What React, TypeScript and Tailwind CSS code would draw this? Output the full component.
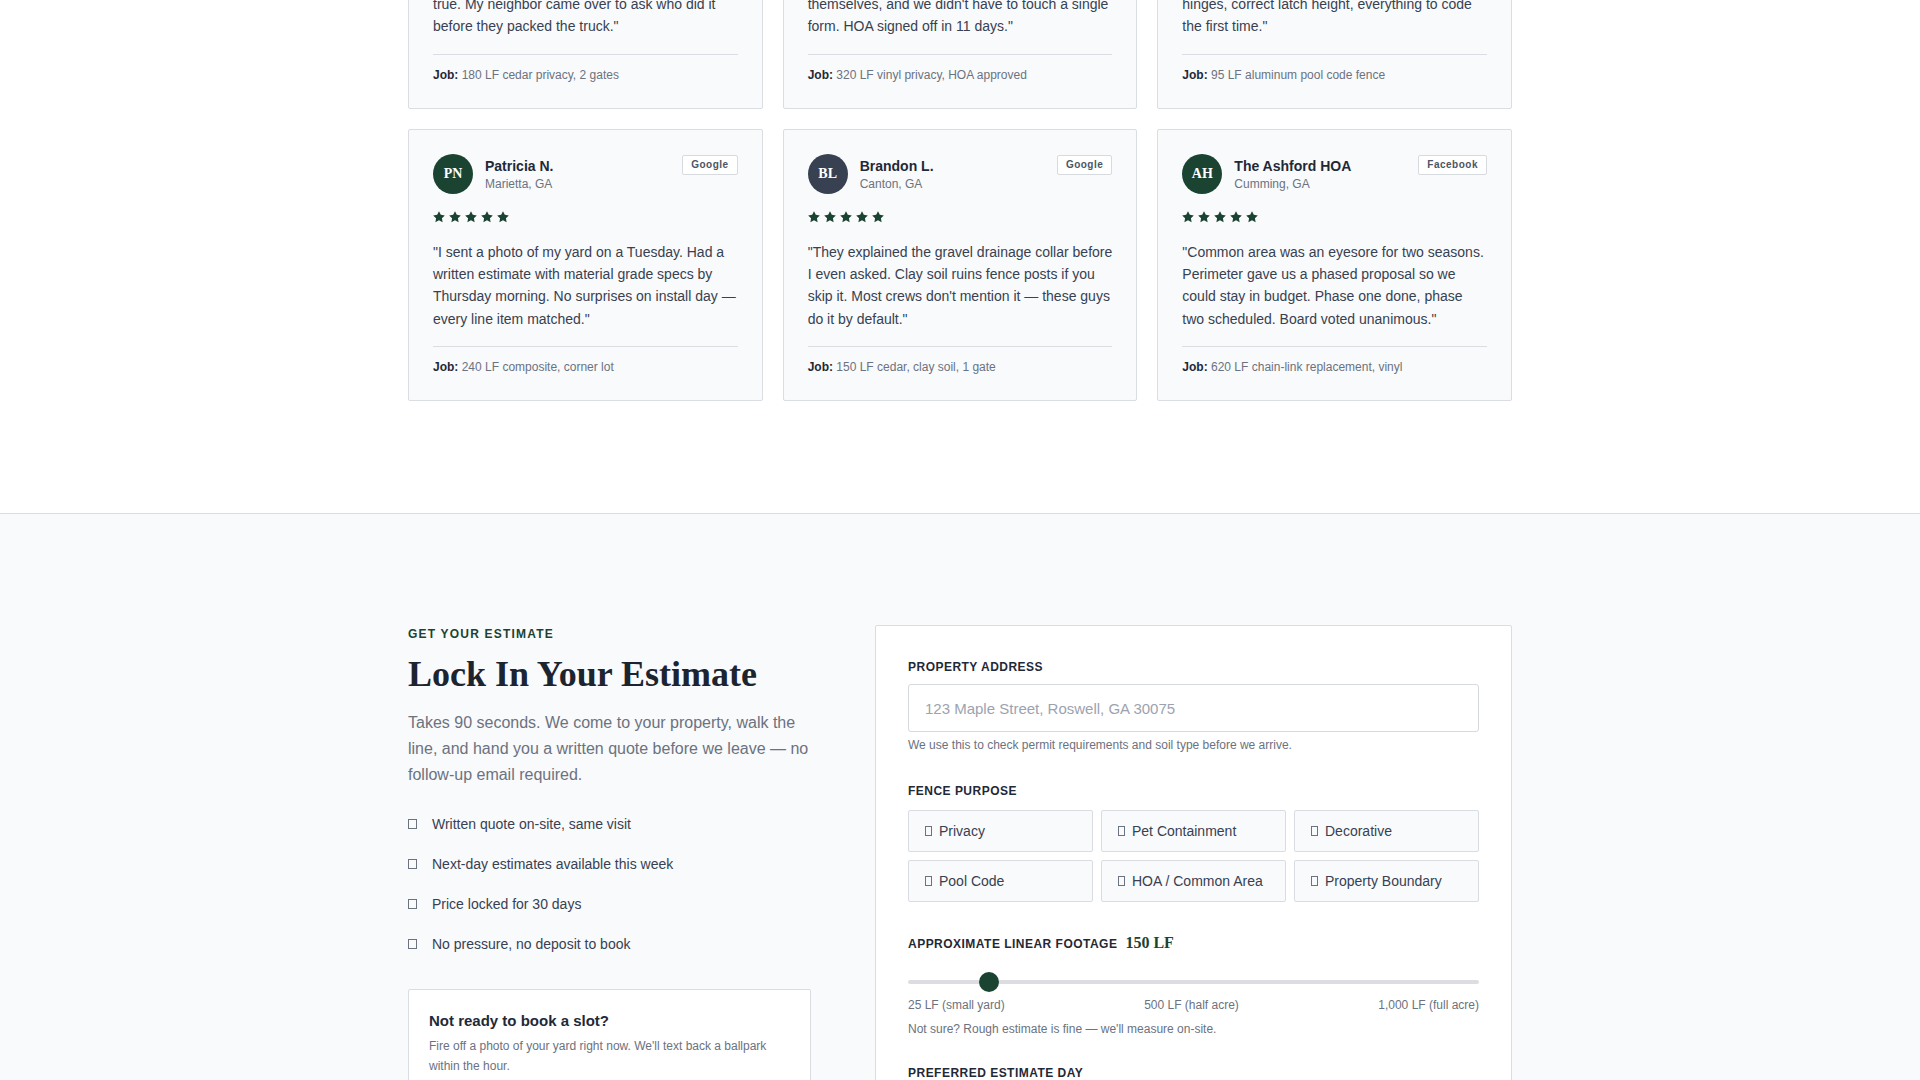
import React from "react";

type Review = {
  initials: string;
  name: string;
  location: string;
  source: string;
  avatar: string;
  lines: string[];
  job: string;
};

const reviews: Review[] = [
  {
    initials: "DR",
    name: "David R.",
    location: "Roswell, GA",
    source: "Google",
    avatar: "bg-[#1b4332]",
    lines: [
      "\"Got three quotes and Perimeter was the only crew",
      "that pulled the permit for us. Gates swing dead",
      "true. My neighbor came over to ask who did it",
      "before they packed the truck.\"",
    ],
    job: "180 LF cedar privacy, 2 gates",
  },
  {
    initials: "MT",
    name: "Michelle T.",
    location: "Alpharetta, GA",
    source: "Google",
    avatar: "bg-[#374151]",
    lines: [
      "\"Our HOA has strict vinyl specs. The crew pulled",
      "the architectural guidelines and filed the request",
      "themselves, and we didn't have to touch a single",
      "form. HOA signed off in 11 days.\"",
    ],
    job: "320 LF vinyl privacy, HOA approved",
  },
  {
    initials: "KS",
    name: "Kevin S.",
    location: "Milton, GA",
    source: "Yelp",
    avatar: "bg-[#1b4332]",
    lines: [
      "\"We needed the pool fence inspected before our",
      "closing date. Self-closing gates, proper gate",
      "hinges, correct latch height, everything to code",
      "the first time.\"",
    ],
    job: "95 LF aluminum pool code fence",
  },
  {
    initials: "PN",
    name: "Patricia N.",
    location: "Marietta, GA",
    source: "Google",
    avatar: "bg-[#1b4332]",
    lines: [
      "\"I sent a photo of my yard on a Tuesday. Had a",
      "written estimate with material grade specs by",
      "Thursday morning. No surprises on install day —",
      "every line item matched.\"",
    ],
    job: "240 LF composite, corner lot",
  },
  {
    initials: "BL",
    name: "Brandon L.",
    location: "Canton, GA",
    source: "Google",
    avatar: "bg-[#374151]",
    lines: [
      "\"They explained the gravel drainage collar before",
      "I even asked. Clay soil ruins fence posts if you",
      "skip it. Most crews don't mention it — these guys",
      "do it by default.\"",
    ],
    job: "150 LF cedar, clay soil, 1 gate",
  },
  {
    initials: "AH",
    name: "The Ashford HOA",
    location: "Cumming, GA",
    source: "Facebook",
    avatar: "bg-[#1b4332]",
    lines: [
      "\"Common area was an eyesore for two seasons.",
      "Perimeter gave us a phased proposal so we",
      "could stay in budget. Phase one done, phase",
      "two scheduled. Board voted unanimous.\"",
    ],
    job: "620 LF chain-link replacement, vinyl",
  },
];

function Star() {
  return (
    <svg width="14" height="14" viewBox="0 0 24 24" className="fill-[#1b4332]">
      <path d="M12 2l3.09 6.26L22 9.27l-5 4.87 1.18 6.88L12 17.77l-6.18 3.25L7 14.14 2 9.27l6.91-1.01L12 2z" />
    </svg>
  );
}

function ReviewCard({ r }: { r: Review }) {
  return (
    <div className="bg-[#f9fafb] border border-[#dadde2] rounded-[2px] px-6 pt-6 pb-[25px]">
      <div className="flex items-start justify-between">
        <div className="flex items-center gap-3">
          <div
            className={`w-10 h-10 rounded-full ${r.avatar} flex items-center justify-center text-white font-['Liberation_Serif','Times_New_Roman',serif] font-bold text-[14px]`}
          >
            {r.initials}
          </div>
          <div className="flex flex-col">
            <span className="text-[14px] leading-[20px] font-bold text-[#1f2937]">{r.name}</span>
            <span className="text-[12px] leading-[16px] text-[#6b7280]">{r.location}</span>
          </div>
        </div>
        <span className="mt-px h-5 px-2 flex items-center border border-[#d7dade] bg-white rounded-[2px] text-[10px] font-bold tracking-[0.05em] text-[#4b5563]">
          {r.source}
        </span>
      </div>
      <div className="mt-4 h-[14px] flex items-center gap-[2px] -ml-px">
        <Star />
        <Star />
        <Star />
        <Star />
        <Star />
      </div>
      <div className="mt-[17px] text-[14px] leading-[22.4px] text-[#374151]">
        {r.lines.map((l, i) => (
          <div key={i} className="whitespace-nowrap">
            {l}
          </div>
        ))}
      </div>
      <div className="mt-4 border-t border-[#dadde2] pt-3 text-[12px] leading-[16px] text-[#6b7280]">
        <span className="font-bold text-[#1f2937]">Job:</span> {r.job}
      </div>
    </div>
  );
}

function Tofu({ small }: { small?: boolean }) {
  return (
    <span
      className={
        small
          ? "inline-block w-[7px] h-[10px] border border-[#6b7280] shrink-0"
          : "inline-block w-[9px] h-[10px] border border-[#6b7280] shrink-0"
      }
    />
  );
}

const checklist = [
  "Written quote on-site, same visit",
  "Next-day estimates available this week",
  "Price locked for 30 days",
  "No pressure, no deposit to book",
];

const purposes = [
  "Privacy",
  "Pet Containment",
  "Decorative",
  "Pool Code",
  "HOA / Common Area",
  "Property Boundary",
];

const days = ["Mon", "Tue", "Wed", "Thu", "Fri", "Sat"];

export default function App() {
  const min = 25;
  const max = 1000;
  const val = 150;
  const pct = (val - min) / (max - min);

  return (
    <div className="min-h-screen bg-white font-['Liberation_Sans',Arial,sans-serif] overflow-hidden">
      {/* Reviews section */}
      <section className="bg-white pb-28">
        <div className="w-[1104px] mx-auto -mt-[164px] grid grid-cols-3 gap-5">
          {reviews.map((r, i) => (
            <ReviewCard key={i} r={r} />
          ))}
        </div>
      </section>

      {/* Estimate section */}
      <section className="bg-[#f9fafb] border-t border-[#d9dce1] pt-[111px] pb-28">
        <div className="w-[1104px] mx-auto grid grid-cols-[403px_1fr] gap-16 items-start">
          {/* Left column */}
          <div>
            <div className="text-[12px] leading-[18px] font-bold tracking-[0.1em] text-[#1b4332]">
              GET YOUR ESTIMATE
            </div>
            <h2 className="mt-[10px] font-['Liberation_Serif','Times_New_Roman',serif] font-bold text-[36px] leading-[1.2] text-[#1c2430]">
              Lock In Your Estimate
            </h2>
            <p className="mt-[14px] text-[16px] leading-[26px] text-[#6b7280] whitespace-nowrap">
              Takes 90 seconds. We come to your property, walk the
              <br />
              line, and hand you a written quote before we leave — no
              <br />
              follow-up email required.
            </p>
            <ul className="mt-6 flex flex-col gap-4">
              {checklist.map((c) => (
                <li key={c} className="flex items-center gap-[15px] text-[14px] leading-[24px] text-[#374151]">
                  <Tofu />
                  <span>{c}</span>
                </li>
              ))}
            </ul>
            <div className="mt-[33px] bg-white border border-[#dadde2] rounded-[2px] p-5">
              <div className="text-[15px] leading-[22px] font-bold text-[#1f2937]">Not ready to book a slot?</div>
              <p className="mt-1 text-[12px] leading-[20px] text-[#6b7280]">
                Fire off a photo of your yard right now. We'll text back a ballpark
                <br />
                within the hour.
              </p>
              <button className="mt-4 h-10 px-4 border border-[#1b4332] text-[#1b4332] text-[13px] font-bold rounded-[2px]">
                Text a Photo
              </button>
            </div>
          </div>

          {/* Right column: form */}
          <div className="bg-white border border-[#dadde2] rounded-[2px] p-8">
            <div>
              <div className="text-[12px] leading-[18px] font-bold tracking-[0.04em] text-[#1f2937]">
                PROPERTY ADDRESS
              </div>
              <input
                className="mt-2 w-full h-12 px-4 border border-[#d5d8dd] rounded-[3px] text-[15px] text-[#1f2937] placeholder:text-[#9ca3af] outline-none bg-white"
                placeholder="123 Maple Street, Roswell, GA 30075"
              />
              <div className="mt-[4px] text-[12px] leading-[18px] text-[#6b7280]">
                We use this to check permit requirements and soil type before we arrive.
              </div>
            </div>

            <div className="mt-7">
              <div className="text-[12px] leading-[18px] font-bold tracking-[0.04em] text-[#1f2937]">
                FENCE PURPOSE
              </div>
              <div className="mt-[10px] grid grid-cols-3 gap-2">
                {purposes.map((p) => (
                  <div
                    key={p}
                    className="h-[42px] flex items-center gap-[7px] px-4 bg-[#f9fafb] border border-[#d9dce1] rounded-[2px] text-[14px] text-[#374151]"
                  >
                    <Tofu small />
                    <span>{p}</span>
                  </div>
                ))}
              </div>
            </div>

            <div className="mt-[29px]">
              <div className="flex items-baseline gap-2">
                <span className="text-[12px] leading-[18px] font-bold tracking-[0.04em] text-[#1f2937]">
                  APPROXIMATE LINEAR FOOTAGE
                </span>
                <span className="font-['Liberation_Serif','Times_New_Roman',serif] font-bold text-[16px] leading-[24px] text-[#1b4332]">
                  {val} LF
                </span>
              </div>
              <div className="mt-[17px] relative h-5 flex items-center">
                <div className="w-full h-1 rounded-full bg-[#dcdde0]" />
                <div
                  className="absolute top-0 w-5 h-5 rounded-full bg-[#1b4332]"
                  style={{ left: `calc(${pct} * (100% - 20px))` }}
                />
              </div>
              <div className="mt-1 flex justify-between text-[12px] leading-[18px] text-[#6b7280]">
                <span>25 LF (small yard)</span>
                <span>500 LF (half acre)</span>
                <span>1,000 LF (full acre)</span>
              </div>
              <div className="mt-1.5 text-[12px] leading-[18px] text-[#6b7280]">
                Not sure? Rough estimate is fine — we'll measure on-site.
              </div>
            </div>

            <div className="mt-[26px]">
              <div className="text-[12px] leading-[18px] font-bold tracking-[0.04em] text-[#1f2937]">
                PREFERRED ESTIMATE DAY
              </div>
              <div className="mt-[10px] grid grid-cols-6 gap-2">
                {days.map((d) => (
                  <div
                    key={d}
                    className="h-[42px] flex items-center justify-center bg-[#f9fafb] border border-[#d9dce1] rounded-[2px] text-[14px] text-[#374151]"
                  >
                    {d}
                  </div>
                ))}
              </div>
            </div>

            <button className="mt-8 w-full h-12 bg-[#1b4332] text-white text-[15px] font-bold rounded-[2px]">
              Lock In My Estimate
            </button>
          </div>
        </div>
      </section>
    </div>
  );
}
